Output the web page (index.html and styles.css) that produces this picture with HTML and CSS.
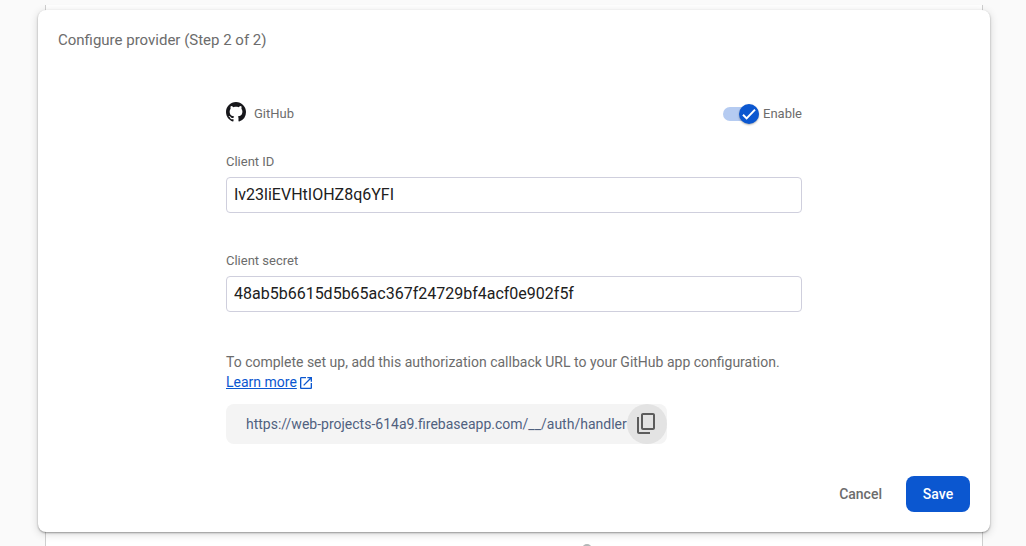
FILE: index.html
```html
<!DOCTYPE html>
<html lang="en">
<head>
<meta charset="utf-8">
<meta name="viewport" content="width=device-width, initial-scale=1">
<title>Configure provider</title>
<link rel="stylesheet" href="styles.css">
</head>
<body>
<div class="page">
  <div class="underlay"><span class="underlay-dot"></span></div>
  <main class="dialog" role="dialog" aria-labelledby="dialog-title">
    <h1 class="title" id="dialog-title">Configure provider (Step 2 of 2)</h1>
    <form class="form" id="provider-form">
      <div class="provider-row">
        <div class="provider">
          <svg class="github-logo" viewBox="0 0 16 16" aria-hidden="true"><path fill-rule="evenodd" d="M8 0C3.58 0 0 3.58 0 8c0 3.54 2.29 6.53 5.47 7.59.4.07.55-.17.55-.38 0-.19-.01-.82-.01-1.49-2.01.37-2.53-.49-2.69-.94-.09-.23-.48-.94-.82-1.13-.28-.15-.68-.52-.01-.53.63-.01 1.08.58 1.23.82.72 1.21 1.87.87 2.33.66.07-.52.28-.87.51-1.07-1.78-.2-3.64-.89-3.64-3.95 0-.87.31-1.59.82-2.15-.08-.2-.36-1.02.08-2.12 0 0 .67-.21 2.2.82.64-.18 1.32-.27 2-.27s1.36.09 2 .27c1.53-1.04 2.2-.82 2.2-.82.44 1.1.16 1.92.08 2.12.51.56.82 1.27.82 2.15 0 3.07-1.87 3.75-3.65 3.95.29.25.54.73.54 1.48 0 1.07-.01 1.93-.01 2.2 0 .21.15.46.55.38A8.01 8.01 0 0 0 16 8c0-4.42-3.58-8-8-8z"/></svg>
          <span>GitHub</span>
        </div>
        <label class="toggle">
          <input class="toggle-input" type="checkbox" role="switch" checked>
          <span class="toggle-track"><span class="toggle-thumb"><svg class="toggle-check" viewBox="0 0 20 20" aria-hidden="true"><path d="M4 10.800l3.600 3.600 8.400-8.800"/></svg></span></span>
          <span>Enable</span>
        </label>
      </div>
      <div class="field">
        <label class="label" for="client-id">Client ID</label>
        <input class="input" id="client-id" type="text" value="Iv23liEVHtIOHZ8q6YFI" spellcheck="false">
      </div>
      <div class="field">
        <label class="label" for="client-secret">Client secret</label>
        <input class="input" id="client-secret" type="text" value="48ab5b6615d5b65ac367f24729bf4acf0e902f5f" spellcheck="false">
      </div>
      <p class="help">To complete set up, add this authorization callback URL to your GitHub app configuration. <a class="learn-more" href="#learn-more">Learn more<svg class="external" viewBox="0 0 24 24" aria-hidden="true"><path d="M19 19H5V5h7V3H5c-1.110 0-2 .9-2 2v14c0 1.100.89 2 2 2h14c1.100 0 2-.9 2-2v-7h-2v7zM14 3v2h3.590l-9.830 9.830 1.410 1.410L19 6.410V10h2V3h-7z"/></svg></a></p>
      <div class="callback">
        <span class="callback-url">https://web-projects-614a9.firebaseapp.com/__/auth/handler</span>
        <button class="copy" type="button" aria-label="Copy URL"><svg class="copy-icon" viewBox="0 0 24 24" aria-hidden="true"><path d="M16 21v2H5c-1.100 0-2-.9-2-2V6h2v15zM9 2h10c1.100 0 2 .9 2 2v13c0 1.100-.9 2-2 2H9c-1.100 0-2-.9-2-2V4c0-1.100.9-2 2-2zm0 2v13h10V4z" fill-rule="evenodd"/></svg></button>
      </div>
    </form>
    <div class="actions">
      <button class="button" type="button">Cancel</button>
      <button class="button button-primary" type="submit" form="provider-form">Save</button>
    </div>
  </main>
</div>
</body>
</html>
```
FILE: styles.css
```css
* {
  box-sizing: border-box;
}

body {
  margin: 0;
  background: #fafafa;
  color: #6c6c6c;
  font: 14px/20px Roboto, "Noto Sans", sans-serif;
}

.page {
  position: relative;
  min-height: 100vh;
  padding: 10px 36px 14px 38px;
  overflow: hidden;
}

.underlay {
  position: absolute;
  inset: 5px 43px 0 45px;
  border: solid #cfcfcf;
  border-width: 0 1px;
  background: #fff;
}

.underlay-dot {
  position: absolute;
  bottom: -8px;
  left: 536px;
  width: 10px;
  height: 10px;
  border-radius: 50%;
  background: #b4b8b8;
}

.dialog {
  position: relative;
  padding: 20px;
  border-radius: 8px;
  background: #fff;
  box-shadow: 0 1px 2px rgba(0, 0, 0, 0.35), 0 2px 8px rgba(0, 0, 0, 0.16);
}

.title {
  margin: 0;
  font-size: 15px;
  font-weight: 400;
}

.form {
  max-width: 576px;
  margin: 44px auto 0;
}

.provider-row {
  display: flex;
  align-items: center;
  justify-content: space-between;
  height: 40px;
  font-size: 13px;
}

.provider {
  display: flex;
  align-items: center;
  gap: 8px;
}

.github-logo {
  width: 20px;
  height: 20px;
  margin-bottom: 4px;
  fill: #17171b;
}

.toggle {
  position: relative;
  display: flex;
  align-items: center;
  gap: 4px;
  cursor: pointer;
}

.toggle-input {
  position: absolute;
  width: 36px;
  height: 20px;
  margin: 0;
  opacity: 0;
}

.toggle-track {
  display: flex;
  align-items: center;
  justify-content: flex-end;
  width: 36px;
  height: 14px;
  border-radius: 7px;
  background: #b5cbf1;
}

.toggle-thumb {
  width: 20px;
  height: 20px;
  border-radius: 50%;
  background: #0b57d0;
  box-shadow: 0 1px 2px rgba(0, 0, 0, 0.3);
}

.toggle-check {
  display: block;
  width: 20px;
  height: 20px;
  fill: none;
  stroke: #fff;
  stroke-width: 2;
}

.field {
  display: grid;
  gap: 7px;
  margin: 20px 0 40px;
}

.label {
  font-size: 13px;
  line-height: 16px;
}

.input {
  width: 100%;
  height: 36px;
  padding: 0 7px 2px;
  border: 1px solid #cfcfdd;
  border-radius: 4px;
  background: #fff;
  color: #202020;
  font: 16px/20px Roboto, "Noto Sans", sans-serif;
}

.help {
  margin: 0 0 12px;
}

.learn-more {
  display: block;
  color: #0b57d0;
}

.external {
  width: 16px;
  height: 16px;
  margin-left: 1px;
  fill: currentColor;
  vertical-align: -4px;
}

.callback {
  display: flex;
  align-items: center;
  width: fit-content;
  height: 40px;
  padding-left: 20px;
  border-radius: 8px;
  background: #f4f4f4;
}

.callback-url {
  color: #50617f;
}

.copy {
  display: grid;
  place-items: center;
  width: 40px;
  height: 40px;
  padding: 0 2px 2px 0;
  border: 0;
  border-radius: 50%;
  background: #e3e3e3;
}

.copy-icon {
  width: 24px;
  height: 24px;
  fill: #5c5c5c;
}

.actions {
  display: flex;
  justify-content: flex-end;
  gap: 8px;
  margin-top: 32px;
}

.button {
  height: 36px;
  padding: 0 16px;
  border: 0;
  border-radius: 8px;
  background: transparent;
  color: #6c6c6c;
  font: 500 14px/20px Roboto, "Noto Sans", sans-serif;
}

.button-primary {
  min-width: 64px;
  background: #0b57d0;
  color: #fff;
}
```
